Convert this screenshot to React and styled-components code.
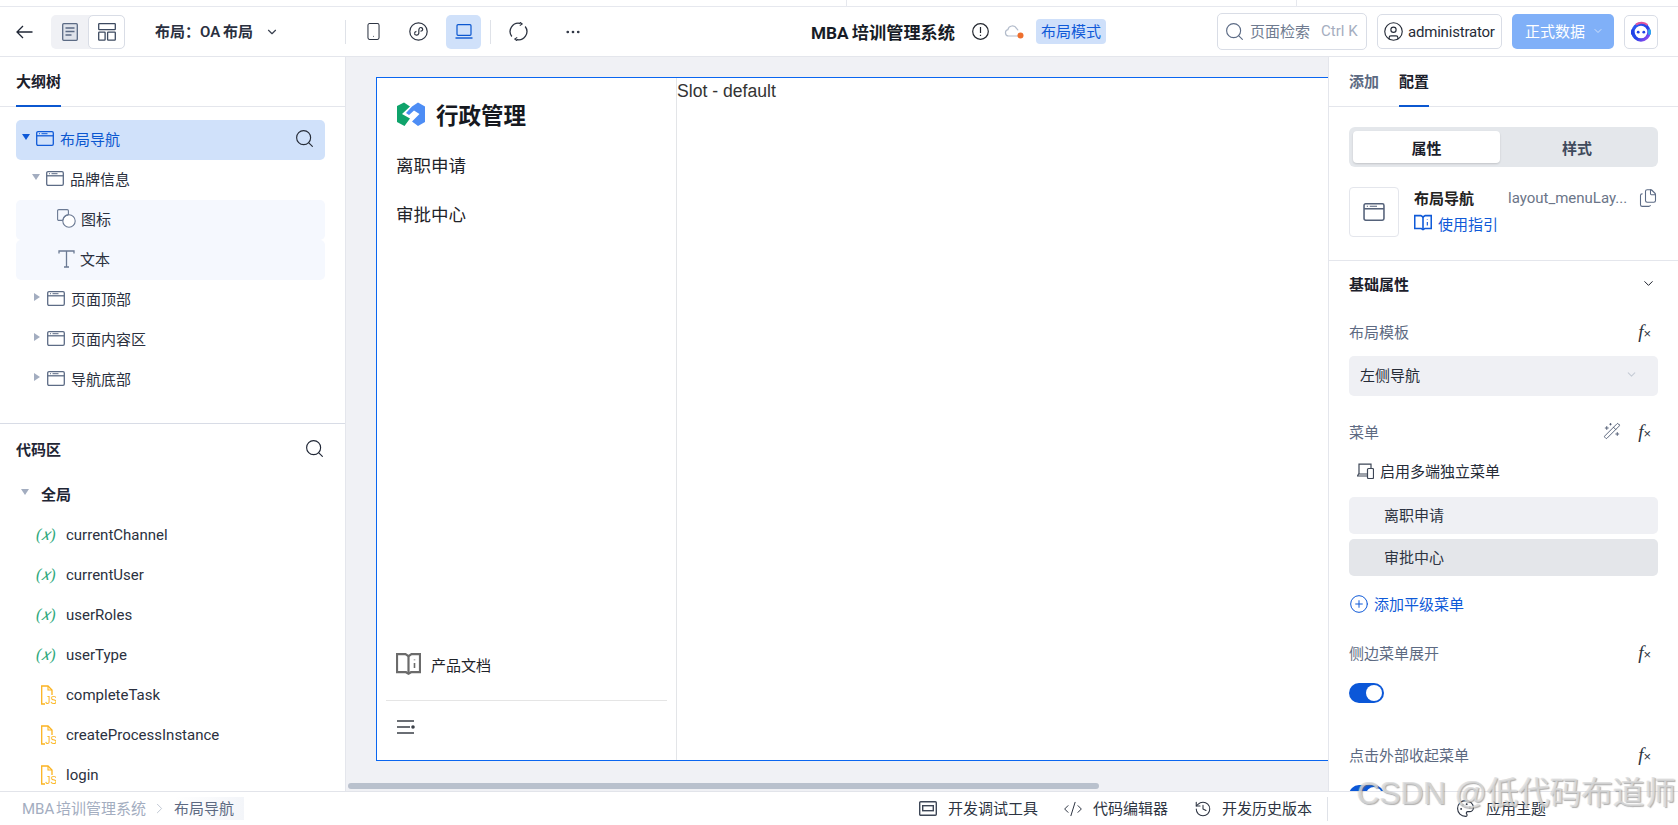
import React from "react";
import styled, { createGlobalStyle } from "styled-components";
import { Search, ChevronDown, ChevronRight, Smartphone, Ellipsis, CircleUser, WandSparkles, CirclePlus, Palette, History, CodeXml, Files } from "lucide-react";

const Global = createGlobalStyle`
  html, body { margin: 0; padding: 0; background: #fff; }
  * { box-sizing: border-box; }
  body { font-family: Roboto, "Noto Sans CJK SC", sans-serif; color: #1f2635; font-size: 15px; }
`;

const Page = styled.div`width: 1678px; height: 825px; overflow: hidden; position: relative; display: flex; flex-direction: column; background: #fff;`;
const TopStrip = styled.div`height: 7px; flex: none; border-bottom: 1px solid #e6e8ee; display: flex;`;
const Tick = styled.span`width: 1px; background: #e6e8ee; margin-left: ${p => p.$ml}px;`;

const Header = styled.header`height: 50px; flex: none; border-bottom: 1px solid #e4e6ec; display: flex; align-items: center;`;
const HeaderLeft = styled.div`width: 345px; flex: none; display: flex; align-items: center; padding-left: 16px;`;
const Back = styled.span`display: flex; width: 17px; flex: none; color: #1f2635; justify-content: center;`;
const ModeSwitch = styled.div`margin-left: 18px; width: 74px; height: 34px; flex: none; display: flex; background: #f0f1f5; border-radius: 5px;`;
const ModeBtn = styled.span`
  width: ${p => p.$w}px; height: 34px; display: flex; align-items: center; justify-content: center; color: #5c6b85;
  ${p => p.$on && "background:#fff;border:1px solid #d9dde6;border-radius:5px;color:#3d4a60;"}
`;
const LayoutName = styled.span`margin: -2px 0 0 30px; font-size: 15px; font-weight: 600; color: #2a3040; white-space: pre; word-spacing: -1px;`;
const LayoutCaret = styled.span`margin-left: 12px; display: flex; color: #3a4150;`;
const Tools = styled.div`width: 466px; flex: none; display: flex; align-items: center; gap: 9px;`;
const VRule = styled.span`width: 1px; height: 24px; background: #dfe2e8; flex: none;`;
const ToolBtn = styled.span`
  width: ${p => p.$w || 36}px; height: 34px; border-radius: 5px; display: flex; align-items: center; justify-content: center; flex: none; color: #2d3442;
  margin-left: ${p => p.$ml || 0}px;
  ${p => p.$on && "background:#d0e1fa;color:#0b57d0;"}
`;
const TitleGroup = styled.div`display: flex; align-items: center; flex: none;`;
const Title = styled.span`font-size: 17.2px; font-weight: 700; color: #171c26; margin-top: -1px; word-spacing: -1px;`;
const Alert = styled.span`margin-left: 17px; display: flex; color: #23272f;`;
const Cloud = styled.span`margin-left: 15px; display: flex;`;
const ModeBadge = styled.span`margin-left: 12px; width: 70px; height: 25px; padding-bottom: 2px; background: #cfe0fa; color: #0f5ad8; font-size: 15px; border-radius: 4px; display: flex; align-items: center; justify-content: center;`;
const HeaderRight = styled.div`margin-left: auto; padding-right: 20px; display: flex; align-items: center; gap: 10px;`;
const SearchBox = styled.div`width: 150px; height: 37px; border: 1px solid #d9dde6; border-radius: 5px; display: flex; align-items: center; padding-left: 6px; color: #5c6b85; font-size: 15px;`;
const SearchText = styled.span`margin: -2px 0 0 5px; color: #6f7b90;`;
const Kbd = styled.span`margin: -1px 0 0 11px; color: #a5aec0;`;
const UserBox = styled.div`width: 125px; height: 35px; border: 1px solid #d9dde6; border-radius: 5px; display: flex; align-items: center; padding-left: 5px; gap: 4px; font-size: 15px; letter-spacing: -.2px; color: #262c38;`;
const DataBtn = styled.div`width: 102px; height: 35px; padding: 0 0 2px 13px; background: #80b0f8; border-radius: 5px; color: #fff; display: flex; align-items: center; font-size: 15px; gap: 7px;`;
const BotBtn = styled.div`width: 34px; height: 34px; border: 1px solid #d9dde6; border-radius: 5px; display: flex; align-items: center; justify-content: center;`;

const Body = styled.div`height: 734px; flex: none; display: flex; overflow: hidden;`;
const LeftPanel = styled.aside`width: 346px; flex: none; border-right: 1px solid #e4e6ec; display: flex; flex-direction: column; overflow: hidden;`;
const TabBar = styled.div`height: 50px; flex: none; border-bottom: 1px solid #e4e6ec; display: flex; padding-left: ${p => p.$pl}px; gap: 20px;`;
const Tab = styled.span`
  height: 50px; display: flex; align-items: center; font-size: 15px; font-weight: 600; padding-bottom: 2px;
  color: ${p => p.$on ? "#1b202b" : "#5d6a82"};
  border-bottom: 2px solid ${p => p.$on ? "#0b57d0" : "transparent"};
`;
const TreeArea = styled.div`height: 317px; flex: none; padding: 13px 20px 0 16px; border-bottom: 1px solid #d8dce6;`;
const TreeRow = styled.div`
  height: 40px; display: flex; align-items: center; padding: 0 0 3px ${p => p.$pl}px; gap: ${p => p.$gap || 6}px; font-size: 15px; border-radius: 5px; color: #2b3140;
  ${p => p.$on && "background:#d0e1fa;color:#0b57d0;"}
  ${p => p.$soft && "background:#f5f8fe;"}
`;
const TreeCaret = styled.span`
  width: 0; height: 0; flex: none;
  ${p => p.$open
    ? `border-left:4px solid transparent;border-right:4px solid transparent;border-top:6px solid ${p.$c || "#a3adc0"};margin-top:-3px;`
    : `border-top:4px solid transparent;border-bottom:4px solid transparent;border-left:6px solid ${p.$c || "#a3adc0"};margin-top:-3px;margin-left:1px;margin-right:1px;`}
`;
const RowEnd = styled.span`margin-left: auto; margin-right: 10px; display: flex; color: #262c38;`;

const CodeArea = styled.div`flex: 1; overflow: hidden; padding: 0 20px 0 16px;`;
const CodeHead = styled.div`height: 50px; padding-bottom: 2px; display: flex; align-items: center; justify-content: space-between; font-weight: 600; font-size: 15px; color: #1f2635;`;
const GroupRow = styled.div`height: 40px; padding-bottom: 2px; display: flex; align-items: center; padding-left: 5px; gap: 12px; font-weight: 600; font-size: 15px;`;
const CodeRow = styled.div`height: 40px; padding-top: 1px; display: flex; align-items: center; font-size: 15px; color: #2b3140;`;
const CodeIcon = styled.span`width: 50px; padding-left: ${p => p.$pl || 20}px; display: flex; flex: none;`;
const VarGlyph = styled.span`font-family: "Liberation Serif", serif; font-style: italic; color: #2fa97c; font-size: 16px; line-height: 1; white-space: pre;`;

const Canvas = styled.main`flex: 1; min-width: 0; background: #f0f1f5; position: relative; overflow: hidden; padding: 20px 0 0 30px;`;
const Frame = styled.div`width: 1100px; height: 684px; background: #fff; border: 1px solid #0a66f0; display: flex;`;
const SideNav = styled.div`width: 300px; flex: none; border-right: 1px solid #e3e5e8; display: flex; flex-direction: column; padding: 23px 9px 0;`;
const Brand = styled.div`height: 25px; flex: none; display: flex; align-items: center; padding-left: 11px; gap: 11px; font-size: 22.5px; font-weight: 700; color: #16191f;`;
const NavItem = styled.div`height: 49px; flex: none; display: flex; align-items: center; padding-left: 10px; font-size: 17.5px; color: #1f2329; margin-top: ${p => p.$mt || 0}px;`;
const DocLink = styled.div`margin: auto 0 14px; height: 44px; flex: none; display: flex; align-items: center; padding-left: 10px; gap: 10px; font-size: 15px; color: #1f2329;`;
const NavFoot = styled.div`height: 60px; flex: none; padding: 0 0 8px 11px; border-top: 1px solid #e5e5e5; display: flex; align-items: center;`;
const SlotText = styled.div`font-family: "Liberation Sans", Arial, sans-serif; font-size: 17.6px; color: #333; line-height: 24px; height: 24px; margin-top: 1px;`;
const HScroll = styled.div`position: absolute; left: 2px; bottom: 2px; width: 751px; height: 6px; border-radius: 3px; background: #b9c1cd;`;

const RightPanel = styled.aside`width: 350px; flex: none; border-left: 1px solid #e4e6ec; overflow: hidden; display: flex; flex-direction: column;`;
const RightInner = styled.div`flex: none; padding: 20px 20px 0; display: flex; flex-direction: column;`;
const SegTrack = styled.div`height: 40px; background: #e4e7eb; border-radius: 6px; display: flex; padding: 4px;`;
const SegItem = styled.span`
  width: ${p => p.$w}px; border-radius: 4px; display: flex; align-items: center; justify-content: center; font-size: 15px; font-weight: 600;
  ${p => p.$on ? "background:#fff;box-shadow:0 1px 2px rgba(0,0,0,.15);color:#1b202b;" : "color:#3f4a5c;flex:1;"}
`;
const CompRow = styled.div`margin-top: 20px; height: 50px; display: flex;`;
const CompIcon = styled.span`width: 50px; height: 50px; border: 1px solid #e4e6ec; border-radius: 4px; display: flex; align-items: center; justify-content: center; flex: none;`;
const CompInfo = styled.div`margin-left: 15px; flex: 1; display: flex; flex-direction: column;`;
const CompTop = styled.div`height: 24px; padding-bottom: 3px; display: flex; align-items: center;`;
const CompName = styled.span`width: 94px; font-size: 15px; font-weight: 600; color: #222;`;
const CompId = styled.span`font-size: 15px; color: #6b7588; width: 118px; white-space: nowrap;`;
const CompCopy = styled.span`display: flex; color: #5c6b85; margin-left: 12px;`;
const GuideLink = styled.div`height: 26px; padding-bottom: 2px; display: flex; align-items: center; gap: 6px; font-size: 15px; color: #0f5ad8;`;
const Rule = styled.div`height: 1px; flex: none; background: #e4e6ec; margin-top: 23px;`;
const Props = styled.div`flex: none; padding: 0 20px; display: flex; flex-direction: column;`;
const SectionHead = styled.div`height: 47px; padding: 0 2px 2px 0; display: flex; align-items: center; justify-content: space-between; font-size: 15px; font-weight: 600; color: #1b202b;`;
const FieldHead = styled.div`height: 48px; padding-bottom: 2px; margin-top: ${p => p.$mt || 0}px; display: flex; align-items: center; font-size: 15px; color: #5d6a82;`;
const FieldActions = styled.span`margin-left: auto; display: flex; align-items: center; gap: 17px; padding-right: 7px; color: #4c5870;`;
const Fx = styled.span`font-family: "Liberation Serif", serif; font-style: italic; font-size: 19px; line-height: 1; color: #2c3340; white-space: nowrap; & > small { font-size: 13px; font-family: "Liberation Sans", sans-serif; font-style: normal; }`;
const SelectBox = styled.div`height: 40px; background: #eff0f4; border-radius: 5px; display: flex; align-items: center; justify-content: space-between; padding: 0 20px 4px 11px; font-size: 15px; color: #262c38;`;
const MultiRow = styled.div`height: 32px; display: flex; align-items: center; padding: 0 0 3px 8px; gap: 6px; font-size: 15px; color: #262c38;`;
const MenuEntry = styled.div`height: 37px; border-radius: 5px; margin-top: ${p => p.$mt}px; padding: 0 0 2px 35px; display: flex; align-items: center; font-size: 15px; color: #2d3442; background: ${p => p.$dark ? "#e4e6ea" : "#eff0f4"};`;
const AddLink = styled.div`height: 58px; padding-bottom: 3px; display: flex; align-items: center; gap: 5px; font-size: 15px; color: #0f5ad8;`;
const Toggle = styled.span`width: 35px; height: 20px; border-radius: 10px; background: #0b57d8; position: relative; display: block; flex: none; margin-top: ${p => p.$mt}px;
  &::after { content: ""; position: absolute; right: 2px; top: 2px; width: 16px; height: 16px; border-radius: 50%; background: #fff; }`;

const BottomBar = styled.footer`height: 34px; flex: none; border-top: 1px solid #e2e4ea; display: flex; align-items: center; font-size: 15px; color: #2d3442; position: relative; background: #fff;`;
const Crumbs = styled.div`width: 919px; flex: none; padding-left: 22px; display: flex; align-items: center;`;
const CrumbMuted = styled.span`color: #a3adc0; word-spacing: -2px; margin-top: -3px;`;
const CrumbSep = styled.span`display: flex; color: #b7bfcc; margin: 0 6px 0 5px;`;
const CrumbNow = styled.span`height: 23px; padding: 0 10px 3px 0; display: flex; align-items: center; color: #5d6a82; background: linear-gradient(90deg, #fff, #f3f5f9);`;
const BarAction = styled.span`display: flex; align-items: center; gap: ${p => p.$gap}px; margin-right: ${p => p.$mr}px; white-space: nowrap;`;
const BarLabel = styled.span`margin-top: -3px;`;
const BarRule = styled.span`width: 1px; height: 24px; background: #dfe2e8; margin-right: 128px;`;
const Watermark = styled.div`
  position: absolute; left: 1357px; top: 773px; font-size: 31.5px; line-height: 40px; white-space: nowrap; pointer-events: none;
  font-family: "Liberation Sans", "Noto Sans CJK SC", sans-serif; color: rgba(222,222,222,.75);
  text-shadow: 1px 1px 1px rgba(110,110,110,.55), -1px 0 0 rgba(170,170,170,.25);
`;

const BackArrow = () => (
  <svg width="17" height="14" viewBox="0 0 17 14" fill="none" stroke="currentColor" strokeWidth="1.3"><path d="M16.5 7H1M7 1 1 7l6 6"/></svg>
);
const WinIcon = ({ c = "#5c6b85", w = 18, h = 15 }) => (
  <svg width={w} height={h} viewBox="0 0 18 15" fill="none" stroke={c} strokeWidth="1.3"><rect x=".7" y=".7" width="16.6" height="13.6" rx="1.3"/><path d="M.7 4.8h16.6"/><path d="M3 2.7h1M5.5 2.7h6" strokeWidth="1"/></svg>
);
const DocIcon = () => (
  <svg width="16" height="18" viewBox="0 0 16 18" fill="#dfe3eb" stroke="currentColor" strokeWidth="1.3"><rect x=".7" y=".7" width="14.6" height="16.6" rx="1"/><path d="M3.5 5h9M3.5 8.5h9M3.5 12h6" fill="none"/></svg>
);
const LayoutIcon = () => (
  <svg width="18" height="18" viewBox="0 0 18 18" fill="none" stroke="currentColor" strokeWidth="1.3"><rect x=".7" y=".7" width="16.6" height="6" rx=".6"/><rect x=".7" y="9.2" width="6.4" height="8" rx=".6"/><rect x="9.6" y="9.2" width="7.7" height="8" rx=".6"/></svg>
);
const MiniIcon = () => (
  <svg width="19" height="19" viewBox="0 0 19 19" fill="none" stroke="currentColor" strokeWidth="1.2"><circle cx="9.5" cy="9.5" r="8.7"/><path d="M5.5 11.5c0 2 3.6 2.4 4.2.2.4-1.5-.2-3.5.4-5 .6-1.8 3.8-1.5 3.6.7-.1 1.3-1.2 1.8-2.2 1.7"/><path d="M5.5 11.5c0-1.2.8-2 1.9-2.2"/></svg>
);
const LaptopIcon = () => (
  <svg width="18" height="15" viewBox="0 0 18 15" fill="none" stroke="currentColor" strokeWidth="1.2"><rect x="2" y=".7" width="14" height="10.6" rx="1"/><path d="M.5 14h17" strokeWidth="1.4"/></svg>
);
const SyncIcon = () => (
  <svg width="19" height="19" viewBox="0 0 19 19" fill="none" stroke="currentColor" strokeWidth="1.3"><path d="M2.8 14.5A8.3 8.3 0 0 1 11.5 1.5"/><path d="M16.2 4.5a8.3 8.3 0 0 1-8.7 13"/><path d="M11 .2l2.2 1.8-2.4 1.6M8 18.8l-2.2-1.8 2.4-1.6" strokeWidth="1.1"/></svg>
);
const AlertIcon = () => (
  <svg width="17" height="17" viewBox="0 0 17 17" fill="none" stroke="currentColor" strokeWidth="1.2"><circle cx="8.5" cy="8.5" r="7.8"/><path d="M8.5 4v6M8.5 11.8v1.3"/></svg>
);
const CloudIcon = () => (
  <svg width="20" height="15" viewBox="0 0 20 15" fill="none"><path d="M14 12H4.5a3.2 3.2 0 0 1-.6-6.3A4.6 4.6 0 0 1 12.5 4.4c.8.5 1.3 1.2 1.5 2" stroke="#b3bccb" strokeWidth="1.2"/><circle cx="16.5" cy="11.5" r="3" fill="#ee6f2d"/></svg>
);
const BotIcon = () => (
  <svg width="22" height="22" viewBox="0 0 22 22" fill="none">
    <defs><linearGradient id="botg" x1="0" y1="0" x2="1" y2="1"><stop offset="0" stopColor="#2f5df0"/><stop offset=".55" stopColor="#2142e8"/><stop offset="1" stopColor="#a44df0"/></linearGradient></defs>
    <circle cx="11" cy="11" r="8" stroke="url(#botg)" strokeWidth="3.4"/>
    <path d="M6 3.6A9 9 0 0 1 17.5 4" stroke="#e0559c" strokeWidth="2"/>
    <rect x="1" y="8" width="3" height="6" rx="1.5" fill="#2142e8"/><rect x="18" y="8" width="3" height="6" rx="1.5" fill="#2fa0ee"/>
    <circle cx="8.2" cy="11.2" r="1.4" fill="#2142e8"/><circle cx="13.8" cy="11.2" r="1.4" fill="#2142e8"/>
  </svg>
);
const Logo = () => (
  <svg width="28" height="24" viewBox="0 0 28 24">
    <path d="M0 4 7 .5 13 4.5 5 12l8 4.5-5.5 7.5L0 20z" fill="#0fa36b"/>
    <path d="M28 4.5 21 .5 15 4.5 9 11l3 2 5-4.5 5.5 3.5L15 19.5l6 4.5 7-4z" fill="#4d8df5"/>
  </svg>
);
const IconShape = () => (
  <svg width="19" height="19" viewBox="0 0 19 19" fill="none" stroke="#6b7a94" strokeWidth="1.1"><rect x=".6" y=".6" width="10.8" height="10.8" rx="1.2"/><circle cx="12" cy="12" r="6.2" fill="#fff"/><path d="M5.9 11.2a6.2 6.2 0 0 1 5.4-5.3"/></svg>
);
const TextShape = () => (
  <svg width="17" height="18" viewBox="0 0 17 18" fill="none" stroke="#6b7a94" strokeWidth="1.3"><path d="M1 3.5V1h15v2.5M8.5 1v16M6 17h5"/></svg>
);
const JsIcon = () => (
  <svg width="16" height="20" viewBox="0 0 16 20" fill="none"><path d="M5 19H1.7V1h6.3l4 4v5" stroke="#fbb320" strokeWidth="1.3"/><path d="M8 1v4h4" stroke="#fbb320" strokeWidth="1.1"/><text x="5.6" y="19" fontFamily="Liberation Sans" fontSize="10" fill="#fbb320">JS</text></svg>
);
const BookInfo = ({ c, w = 25, h = 25 }) => (
  <svg width={w} height={h} viewBox="0 0 25 25" fill="none" stroke={c} strokeWidth="2.2"><path d="M1 2.2h8.5l3 2 3-2H24v18h-9l-2.5 1.5-2.5-1.5H1z"/><path d="M12.5 4.2v17" /><path d="M18.5 7.5v.8M18.5 11v5" strokeWidth="1.6"/></svg>
);
const MenuLines = () => (
  <svg width="18" height="14" viewBox="0 0 18 14" stroke="#3a3f47" strokeWidth="1.6"><path d="M0 1h17M0 7h13M0 13h17"/><circle cx="16" cy="7" r="1" fill="#3a3f47"/></svg>
);
const Devices = () => (
  <svg width="17" height="16" viewBox="0 0 17 16" fill="none" stroke="#3d4656" strokeWidth="1.2"><path d="M10 11H1.5l-1 2H10M2 11V1.2h12V5"/><rect x="10.5" y="5.5" width="6" height="10" rx="1"/></svg>
);
const FrameIcon = () => (
  <svg width="18" height="15" viewBox="0 0 18 15" fill="none" stroke="#3d4656" strokeWidth="1.4"><rect x=".7" y=".7" width="16.6" height="13.6" rx="1"/><rect x="3.7" y="4.7" width="10.6" height="5"/></svg>
);

const TreeWin = ({ on }) => <WinIcon c={on ? "#0f5ad8" : "#5c6b85"} />;
const fx = <Fx>f<small>×</small></Fx>;
const vars = ["currentChannel", "currentUser", "userRoles", "userType"];
const funcs = ["completeTask", "createProcessInstance", "login"];

export default function App() {
  return (
    <Page>
      <Global />
      <TopStrip><Tick $ml={846} /><Tick $ml={449} /></TopStrip>
      <Header>
        <HeaderLeft>
          <Back><BackArrow /></Back>
          <ModeSwitch>
            <ModeBtn $w={37}><DocIcon /></ModeBtn>
            <ModeBtn $w={37} $on><LayoutIcon /></ModeBtn>
          </ModeSwitch>
          <LayoutName>布局：OA 布局</LayoutName>
          <LayoutCaret><ChevronDown size={14} /></LayoutCaret>
        </HeaderLeft>
        <Tools>
          <VRule />
          <ToolBtn><Smartphone size={19} strokeWidth={1.3} /></ToolBtn>
          <ToolBtn><MiniIcon /></ToolBtn>
          <ToolBtn $w={35} $ml={1} $on><LaptopIcon /></ToolBtn>
          <VRule />
          <ToolBtn><SyncIcon /></ToolBtn>
          <ToolBtn $ml={10}><Ellipsis size={18} strokeWidth={1.6} /></ToolBtn>
        </Tools>
        <TitleGroup>
          <Title>MBA 培训管理系统</Title>
          <Alert><AlertIcon /></Alert>
          <Cloud><CloudIcon /></Cloud>
          <ModeBadge>布局模式</ModeBadge>
        </TitleGroup>
        <HeaderRight>
          <SearchBox><Search size={21} strokeWidth={1.3} /><SearchText>页面检索</SearchText><Kbd>Ctrl K</Kbd></SearchBox>
          <UserBox><CircleUser size={21} strokeWidth={1.3} />administrator</UserBox>
          <DataBtn>正式数据<ChevronDown size={12} color="#cfe0fa" /></DataBtn>
          <BotBtn><BotIcon /></BotBtn>
        </HeaderRight>
      </Header>

      <Body>
        <LeftPanel>
          <TabBar $pl={16}><Tab $on>大纲树</Tab></TabBar>
          <TreeArea>
            <TreeRow $on $pl={6}><TreeCaret $open $c="#0f5ad8" /><TreeWin on />布局导航<RowEnd><Search size={21} strokeWidth={1.3} /></RowEnd></TreeRow>
            <TreeRow $pl={16}><TreeCaret $open /><TreeWin />品牌信息</TreeRow>
            <TreeRow $soft $pl={41} $gap={5}><IconShape />图标</TreeRow>
            <TreeRow $soft $pl={42} $gap={5}><TextShape />文本</TreeRow>
            <TreeRow $pl={17}><TreeCaret /><TreeWin />页面顶部</TreeRow>
            <TreeRow $pl={17}><TreeCaret /><TreeWin />页面内容区</TreeRow>
            <TreeRow $pl={17}><TreeCaret /><TreeWin />导航底部</TreeRow>
          </TreeArea>
          <CodeArea>
            <CodeHead>代码区<Search size={21} strokeWidth={1.3} /></CodeHead>
            <GroupRow><TreeCaret $open />全局</GroupRow>
            {vars.map(v => <CodeRow key={v}><CodeIcon><VarGlyph>(𝑥)</VarGlyph></CodeIcon>{v}</CodeRow>)}
            {funcs.map(v => <CodeRow key={v}><CodeIcon $pl={24}><JsIcon /></CodeIcon>{v}</CodeRow>)}
          </CodeArea>
        </LeftPanel>

        <Canvas>
          <Frame>
            <SideNav>
              <Brand><Logo />行政管理</Brand>
              <NavItem $mt={14}>离职申请</NavItem>
              <NavItem>审批中心</NavItem>
              <DocLink><BookInfo c="#6b6b6b" />产品文档</DocLink>
              <NavFoot><MenuLines /></NavFoot>
            </SideNav>
            <SlotText>Slot - default</SlotText>
          </Frame>
          <HScroll />
        </Canvas>

        <RightPanel>
          <TabBar $pl={20}><Tab>添加</Tab><Tab $on>配置</Tab></TabBar>
          <RightInner>
            <SegTrack><SegItem $w={147} $on>属性</SegItem><SegItem>样式</SegItem></SegTrack>
            <CompRow>
              <CompIcon><WinIcon w={22} h={18} c="#55627a" /></CompIcon>
              <CompInfo>
                <CompTop><CompName>布局导航</CompName><CompId>layout_menuLay...</CompId><CompCopy><Files size={20} strokeWidth={1.3} /></CompCopy></CompTop>
                <GuideLink><BookInfo c="#0f5ad8" w={18} h={18} />使用指引</GuideLink>
              </CompInfo>
            </CompRow>
          </RightInner>
          <Rule />
          <Props>
            <SectionHead>基础属性<ChevronDown size={15} strokeWidth={1.6} /></SectionHead>
            <FieldHead>布局模板<FieldActions>{fx}</FieldActions></FieldHead>
            <SelectBox>左侧导航<ChevronDown size={13} color="#c6ccd6" /></SelectBox>
            <FieldHead $mt={12}>菜单<FieldActions><WandSparkles size={18} strokeWidth={1.2} />{fx}</FieldActions></FieldHead>
            <MultiRow><Devices />启用多端独立菜单</MultiRow>
            <MenuEntry $mt={9}>离职申请</MenuEntry>
            <MenuEntry $mt={5} $dark>审批中心</MenuEntry>
            <AddLink><CirclePlus size={20} strokeWidth={1.2} />添加平级菜单</AddLink>
            <FieldHead $mt={-5}>侧边菜单展开<FieldActions>{fx}</FieldActions></FieldHead>
            <Toggle $mt={6} />
            <FieldHead $mt={28}>点击外部收起菜单<FieldActions>{fx}</FieldActions></FieldHead>
            <Toggle $mt={6} />
          </Props>
        </RightPanel>
      </Body>

      <BottomBar>
        <Crumbs>
          <CrumbMuted>MBA 培训管理系统</CrumbMuted>
          <CrumbSep><ChevronRight size={17} strokeWidth={1.2} /></CrumbSep>
          <CrumbNow>布局导航</CrumbNow>
        </Crumbs>
        <BarAction $gap={11} $mr={25}><FrameIcon /><BarLabel>开发调试工具</BarLabel></BarAction>
        <BarAction $gap={10} $mr={26}><CodeXml size={20} strokeWidth={1.2} /><BarLabel>代码编辑器</BarLabel></BarAction>
        <BarAction $gap={10} $mr={15}><History size={18} strokeWidth={1.4} /><BarLabel>开发历史版本</BarLabel></BarAction>
        <BarRule />
        <BarAction $gap={11} $mr={0}><Palette size={19} strokeWidth={1.4} /><BarLabel>应用主题</BarLabel></BarAction>
      </BottomBar>
      <Watermark>CSDN @低代码布道师</Watermark>
    </Page>
  );
}
